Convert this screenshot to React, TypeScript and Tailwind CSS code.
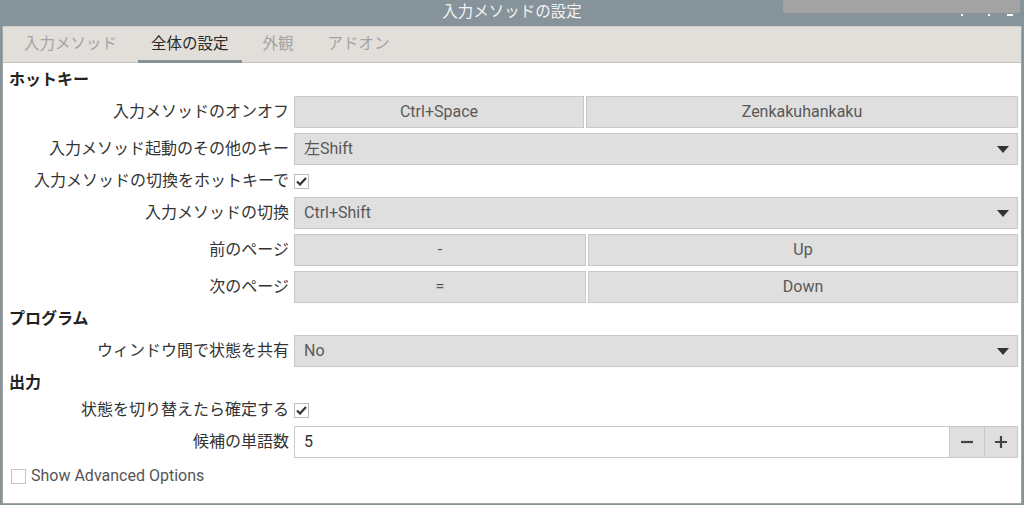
import React from "react";

const font = { fontFamily: "Roboto, 'Noto Sans CJK JP', sans-serif" };

function Check({ checked }: { checked: boolean }) {
  return (
    <div className="w-[15px] h-[15px] border border-[#bdbdbd] bg-white flex items-center justify-center">
      {checked && (
        <svg width="11" height="9" viewBox="0 0 11 9">
          <path d="M1 4.5 L4 7.5 L10 1" stroke="#333" strokeWidth="2.2" fill="none" />
        </svg>
      )}
    </div>
  );
}

function Btn({ children, w = "flex-1" }: { children: React.ReactNode; w?: string }) {
  return (
    <div className={`${w} h-full bg-[#dfdfdf] border border-[#c8c8c8] flex items-center justify-center text-[#595959]`}>
      {children}
    </div>
  );
}

function Combo({ value }: { value: string }) {
  return (
    <div className="flex-1 h-full bg-[#dfdfdf] border border-[#c8c8c8] flex items-center pl-[9px] pr-[8px] text-[#595959]">
      <span className="flex-1">{value}</span>
      <svg width="12" height="7" viewBox="0 0 12 7">
        <path d="M0 0 H12 L6 7 Z" fill="#333" />
      </svg>
    </div>
  );
}

function Row({ label, children, h = "h-[32px]" }: { label: string; children: React.ReactNode; h?: string }) {
  return (
    <div className={`flex items-center ${h}`}>
      <div className="w-[286px] text-right text-[#333] whitespace-nowrap">{label}</div>
      <div className="flex-1 flex items-center h-full ml-[5px] mr-[3px] gap-[2px]">{children}</div>
    </div>
  );
}

function Header({ children }: { children: React.ReactNode }) {
  return <div className="h-[22px] flex items-center pl-[6px] font-bold text-[#222]">{children}</div>;
}

export default function App() {
  return (
    <div className="w-[1024px] h-[505px] bg-[#87939a] flex flex-col text-[16px]" style={font}>
      <div className="h-[26px] relative flex items-center justify-center text-[#f2f2f2] text-[15.5px]">
        <span>入力メソッドの設定</span>
        <div className="absolute left-[783px] top-0 w-[237px] h-[13px] bg-[#a3a3a3] rounded-b-[3px]" />
        <div className="absolute left-[961px] top-[14px] w-[2px] h-[2px] bg-white" />
        <div className="absolute left-[988px] top-[14px] w-[2px] h-[2px] bg-white" />
        <div className="absolute left-[1007px] top-[14px] w-[6px] h-[2px] bg-white" />
      </div>
      <div className="flex-1 flex flex-col bg-white ml-[2px] mr-[2px] mb-[1px] border border-t-0 border-[#a4a4a4]">
        <div className="h-[37px] bg-[#e2dfda] border-b border-[#c4c2bd] flex items-stretch pl-[8px] gap-[8px] border-t border-t-[#cfcdc8] text-[15.5px]">
          {[
            ["入力メソッド", false],
            ["全体の設定", true],
            ["外観", false],
            ["アドオン", false],
          ].map(([t, a]) => (
            <div
              key={t as string}
              className={`px-[13px] pt-[3px] flex items-center border-b-[3px] -mb-px ${
                a ? "border-[#87939a] text-[#2a2a2a]" : "border-transparent text-[#a3a3a3]"
              }`}
            >
              {t}
            </div>
          ))}
        </div>
        <div className="flex flex-col pt-[6px] gap-[5px]">
          <Header>ホットキー</Header>
          <Row label="入力メソッドのオンオフ">
            <Btn w="w-[290px]">Ctrl+Space</Btn>
            <Btn>Zenkakuhankaku</Btn>
          </Row>
          <Row label="入力メソッド起動のその他のキー">
            <Combo value="左Shift" />
          </Row>
          <Row label="入力メソッドの切換をホットキーで" h="h-[22px]">
            <Check checked />
          </Row>
          <Row label="入力メソッドの切換">
            <Combo value="Ctrl+Shift" />
          </Row>
          <Row label="前のページ">
            <Btn w="w-[292px]">-</Btn>
            <Btn>Up</Btn>
          </Row>
          <Row label="次のページ">
            <Btn w="w-[292px]">=</Btn>
            <Btn>Down</Btn>
          </Row>
          <Header>プログラム</Header>
          <Row label="ウィンドウ間で状態を共有">
            <Combo value="No" />
          </Row>
          <Header>出力</Header>
          <Row label="状態を切り替えたら確定する" h="h-[22px]">
            <Check checked />
          </Row>
          <Row label="候補の単語数">
            <div className="flex-1 h-full flex border border-[#c8c8c8]">
              <div className="flex-1 bg-white flex items-center pl-[9px] text-[#333]">5</div>
              <div className="w-[35px] bg-[#dfdfdf] border-l border-[#c8c8c8] flex items-center justify-center">
                <svg width="12" height="12" viewBox="0 0 12 12">
                  <path d="M0 6 H12" stroke="#444" strokeWidth="2.2" />
                </svg>
              </div>
              <div className="w-[33px] bg-[#dfdfdf] border-l border-[#c8c8c8] flex items-center justify-center">
                <svg width="12" height="12" viewBox="0 0 12 12">
                  <path d="M0 6 H12 M6 0 V12" stroke="#444" strokeWidth="2.2" />
                </svg>
              </div>
            </div>
          </Row>
          <div className="h-[22px] mt-[2px] flex items-center pl-[8px] gap-[5px] text-[#555]">
            <div className="w-[15px] h-[15px] border border-[#c4c4c4] bg-white" />
            <span>Show Advanced Options</span>
          </div>
        </div>
      </div>
    </div>
  );
}
